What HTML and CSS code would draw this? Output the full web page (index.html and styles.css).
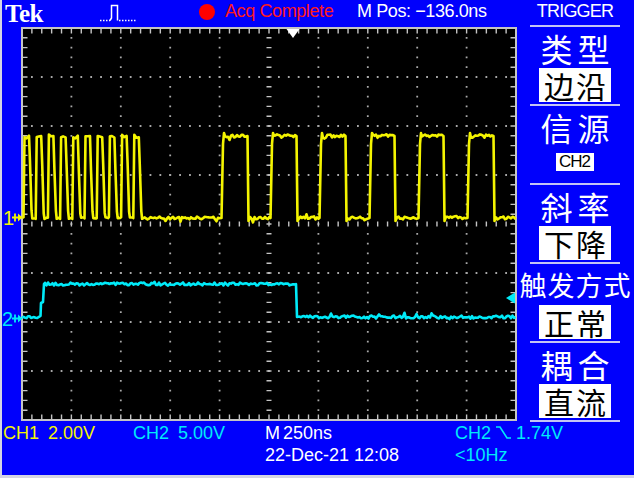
FILE: index.html
```html
<!DOCTYPE html>
<html lang="zh-CN">
<head>
    <meta charset="UTF-8">
    <title>TDS Trigger</title>
    <link rel="stylesheet" href="styles.css">
</head>
<body>
    <div class="scope">
        <div class="topbar">
            <span class="tek">Tek</span>
            <span class="trig-state">
                <svg width="36" height="22" viewBox="0 0 36 22">
                    <path class="dotted" d="M0 19.5 H10"/>
                    <path class="edge" d="M10 19.5 L11.5 17 V4.5 H17.5 V19.5"/>
                    <path class="dotted" d="M19 19.5 H36"/>
                </svg>
            </span>
            <span class="acq-dot"></span>
            <span class="acq">Acq Complete</span>
            <span class="mpos">M Pos: &minus;136.0ns</span>
        </div>
        <div class="menu-title">TRIGGER</div>

        <div class="display">
            <svg id="screen" width="518" height="397" viewBox="2 25 518 397">
                <rect class="grat-bg" x="22" y="28" width="494" height="392"/>
                <!-- 点状网格 -->
                <g class="dots-v">
                    <line x1="71.4" y1="28" x2="71.4" y2="420"/>
                    <line x1="120.8" y1="28" x2="120.8" y2="420"/>
                    <line x1="170.2" y1="28" x2="170.2" y2="420"/>
                    <line x1="219.6" y1="28" x2="219.6" y2="420"/>
                    <line x1="318.4" y1="28" x2="318.4" y2="420"/>
                    <line x1="367.8" y1="28" x2="367.8" y2="420"/>
                    <line x1="417.2" y1="28" x2="417.2" y2="420"/>
                    <line x1="466.6" y1="28" x2="466.6" y2="420"/>
                </g>
                <g class="dots-h">
                    <line x1="22" y1="77" x2="516" y2="77"/>
                    <line x1="22" y1="126" x2="516" y2="126"/>
                    <line x1="22" y1="175" x2="516" y2="175"/>
                    <line x1="22" y1="273" x2="516" y2="273"/>
                    <line x1="22" y1="322" x2="516" y2="322"/>
                    <line x1="22" y1="371" x2="516" y2="371"/>
                </g>
                <!-- 中心轴和边框刻度 -->
                <line class="ticks-v" x1="269" y1="28" x2="269" y2="420"/>
                <line class="ticks-v" x1="25" y1="28" x2="25" y2="420"/>
                <line class="ticks-v" x1="513" y1="28" x2="513" y2="420"/>
                <line class="ticks-h" x1="22" y1="224" x2="516" y2="224"/>
                <line class="ticks-h" x1="22" y1="31" x2="516" y2="31"/>
                <line class="ticks-h" x1="22" y1="417" x2="516" y2="417"/>
                <rect class="grat-border" x="22" y="28" width="494" height="392"/>

                <polyline id="ch1" class="trace ch1"/>
                <polyline id="ch2" class="trace ch2"/>

                <!-- 通道标记 -->
                <text class="mark ch1-mark" x="3" y="225">1</text>
                <path class="arrow ch1-arrow" d="M12 217.5 H19 M15 213.5 V221.5"/>
                <polygon class="ch1-fill" points="18,213.5 22.5,217.5 18,221.5"/>
                <text class="mark ch2-mark" x="2" y="326">2</text>
                <path class="arrow ch2-arrow" d="M12 318.5 H19 M15 314.5 V322.5"/>
                <polygon class="ch2-fill" points="18,314.5 22.5,318.5 18,322.5"/>

                <polygon class="ch2-fill" points="506,298 515,292.5 515,303.5"/>
                <polygon class="trig-pos" points="286.5,29 299.5,29 293,38"/>
            </svg>
        </div>

        <ul class="menu">
            <li class="item">
                <span class="label">类型</span>
                <span class="value">边沿</span>
            </li>
            <li class="item">
                <span class="label">信源</span>
                <span class="value small">CH2</span>
            </li>
            <li class="item">
                <span class="label">斜率</span>
                <span class="value">下降</span>
            </li>
            <li class="item">
                <span class="label wide">触发方式</span>
                <span class="value">正常</span>
            </li>
            <li class="item">
                <span class="label">耦合</span>
                <span class="value">直流</span>
            </li>
        </ul>

        <div class="readout">
            <span class="cell yellow"><span>CH1</span><span>2.00V</span></span>
            <span class="cell cyan"><span>CH2</span><span>5.00V</span></span>
            <span class="cell white tight"><span>M</span><span>250ns</span></span>
            <span class="cell cyan slope-cell">
                <span>CH2</span>
                <svg class="slope" width="15" height="15" viewBox="0 0 15 15">
                    <path d="M0 2 H4 L11 13 H15"/>
                </svg>
                <span>1.74V</span>
            </span>
            <span class="cell white date">22-Dec-21 12:08</span>
            <span class="cell cyan freq">&lt;10Hz</span>
        </div>
    </div>
    <script src="script.js"></script>
</body>
</html>
```

FILE: styles.css
```css
*{
    box-sizing: border-box;
}
body{
    margin: 0;
    background: #fff;
}
.scope{
    width: 634px;
    height: 478px;
    background-color: #0000fc;
    border-left: 2px solid #d4d4e4;
    border-bottom: 3px solid #d4d4e4;
    display: grid;
    grid-template-columns: 518px 114px;
    grid-template-rows: 25px 397px 53px;
    font-family: "Liberation Sans", Arial, sans-serif;
    font-size: 18px;
    color: #fff;
}

/* 顶部状态栏 */
.topbar{
    grid-column: 1;
    grid-row: 1;
    display: grid;
    grid-template-columns: 95px 99px 26px 132px 1fr;
    padding-left: 3px;
    align-items: start;
    line-height: 23px;
    white-space: nowrap;
}
.tek{
    font-family: "Liberation Serif", "Times New Roman", serif;
    font-weight: bold;
    font-size: 25px;
    line-height: 27px;
    letter-spacing: -0.5px;
}
.trig-state svg{
    display: block;
    margin-top: 1px;
}
.trig-state path{
    fill: none;
    stroke: #fff;
    stroke-width: 1.5;
}
.trig-state .dotted{
    stroke-dasharray: 1.5 1.5;
}
.acq-dot{
    width: 16px;
    height: 16px;
    margin-top: 4px;
    border-radius: 50%;
    background-color: #ff0000;
}
.acq{
    color: #ff1a1a;
    letter-spacing: -0.4px;
}
.mpos{
    letter-spacing: -0.4px;
}
.menu-title{
    grid-column: 2;
    grid-row: 1;
    text-align: center;
    line-height: 23px;
    letter-spacing: -0.8px;
    padding-right: 4px;
}

/* 波形显示区 */
.display{
    grid-column: 1;
    grid-row: 2;
}
.display svg{
    display: block;
}
.grat-bg{
    fill: #000;
}
.grat-border{
    fill: none;
    stroke: #c4c4c4;
    stroke-width: 2;
}
.dots-v line{
    stroke: #a8a8a8;
    stroke-width: 1.8;
    stroke-dasharray: 1.8 8;
    stroke-dashoffset: 0.9;
}
.dots-h line{
    stroke: #a8a8a8;
    stroke-width: 1.8;
    stroke-dasharray: 1.8 8.08;
    stroke-dashoffset: 0.9;
}
.ticks-v{
    stroke: #c4c4c4;
    stroke-width: 5;
    stroke-dasharray: 1.4 8.4;
    stroke-dashoffset: 0.7;
}
.ticks-h{
    stroke: #c4c4c4;
    stroke-width: 5;
    stroke-dasharray: 1.4 8.48;
    stroke-dashoffset: 0.7;
}
.trace{
    fill: none;
    stroke-width: 2.6;
    stroke-linejoin: round;
}
.trace.ch1{
    stroke: #f4f400;
}
.trace.ch2{
    stroke: #00eaf8;
}
.mark{
    font-family: "Liberation Sans", Arial, sans-serif;
    font-size: 20px;
}
.ch1-mark, .ch1-fill{
    fill: #f4f400;
}
.ch2-mark, .ch2-fill{
    fill: #00eaf8;
}
.arrow{
    fill: none;
    stroke-width: 1.8;
}
.ch1-arrow{
    stroke: #f4f400;
}
.ch2-arrow{
    stroke: #00eaf8;
}
.trig-pos{
    fill: #fff;
}

/* 右侧触发菜单 */
.menu{
    grid-column: 2;
    grid-row: 2;
    list-style: none;
    margin: 0;
    padding: 0;
    display: flex;
    flex-direction: column;
}
.item{
    height: 79px;
    margin: 0 14px 0 10px;
    border-top: 2px solid #c4c4f4;
    display: flex;
    flex-direction: column;
    align-items: center;
    padding-top: 5px;
}
.item:last-child{
    height: 81px;
    border-bottom: 2px solid #c4c4f4;
}
.label{
    font-family: "Noto Sans CJK SC", sans-serif;
    font-size: 32px;
    line-height: 32px;
    letter-spacing: 5px;
    padding-left: 5px;
    white-space: nowrap;
    margin-bottom: 4px;
}
.label.wide{
    font-size: 27px;
    letter-spacing: 1px;
    padding-left: 1px;
}
.value{
    background-color: #fff;
    color: #000;
    font-family: "Noto Sans CJK SC", sans-serif;
    font-size: 30px;
    line-height: 34px;
    letter-spacing: 2px;
    padding: 0 3px 0 5px;
    white-space: nowrap;
}
.value.small{
    font-family: "Liberation Sans", Arial, sans-serif;
    font-size: 17px;
    line-height: 18px;
    letter-spacing: -1px;
    padding: 0 4px 0 3px;
    margin-top: 6px;
}

/* 底部读数 */
.readout{
    grid-column: 1 / 3;
    grid-row: 3;
    display: grid;
    grid-template-columns: 130px 132px 190px 1fr;
    grid-template-rows: 22px 22px;
    padding-left: 1px;
    line-height: 22px;
    white-space: nowrap;
}
.cell{
    display: flex;
    align-items: center;
    gap: 9px;
}
.cell.tight{
    gap: 3px;
}
.slope-cell{
    gap: 5px;
}
.slope{
    display: block;
    margin-bottom: 2px;
}
.slope path{
    fill: none;
    stroke: #00eaf8;
    stroke-width: 1.6;
}
.date{
    grid-column: 3;
    grid-row: 2;
}
.freq{
    grid-column: 4;
    grid-row: 2;
}
.yellow{
    color: #f4f400;
}
.cyan{
    color: #00eaf8;
}
.white{
    color: #fff;
}
```

FILE: script.js
```js
// 用固定种子的伪随机数给波形加一点噪声
var seed = 12345;
function rnd(){
    seed = (seed * 16807) % 2147483647;
    return seed / 2147483647;
}
function jit(a){
    return (rnd() - 0.5) * 2 * a;
}
// 一段带噪声的平线，偶尔有小毛刺
function flat(pts, x0, x1, y, amp){
    for(var x = x0; x < x1; x += 1.5){
        var spike = rnd() < 0.06 ? jit(4) : 0;
        pts.push([x, y + jit(amp) + spike]);
    }
}

function ch1Points(){
    var lo = 218, hi = 136, pts = [[22, lo]];
    // 前面一串窄脉冲
    for(var k = 0; k < 10; k++){
        var x = 23.5 + 12.2 * k;
        pts.push([x, lo + jit(1)]);
        pts.push([x + 1, hi + jit(1.5)]);
        pts.push([x + 3, hi + 1 + jit(1.5)]);
        pts.push([x + 5.5, hi + 1 + jit(1.5)]);
        pts.push([x + 6.5, hi + 30 + jit(4)]);
        pts.push([x + 8, lo - 6 + jit(2)]);
        pts.push([x + 8.8, lo + jit(1)]);
        pts.push([x + 11.5, lo + jit(1)]);
    }
    // 后面的宽脉冲
    var rises = [222, 271, 320, 370, 419, 468];
    var falls = [248, 297, 346, 395, 444, 494];
    var x = 146;
    for(var i = 0; i < rises.length; i++){
        flat(pts, x, rises[i] - 1, lo, 1.5);
        pts.push([rises[i] - 0.5, lo]);
        pts.push([rises[i] + 1, hi + 8]);
        pts.push([rises[i] + 2, hi - 3]);
        flat(pts, rises[i] + 3, falls[i] - 1, hi, 1.8);
        pts.push([falls[i] - 0.5, hi]);
        pts.push([falls[i] + 0.5, lo + 3]);
        x = falls[i] + 2;
    }
    flat(pts, x, 516, lo, 1.5);
    return pts;
}

function ch2Points(){
    var lo = 317, hi = 284, pts = [];
    flat(pts, 22, 40, lo, 1.2);
    pts.push([40.5, 316], [41, 303], [43, 302], [44, hi]);
    flat(pts, 45, 296, hi, 1.5);
    pts.push([296, hi], [297, lo]);
    flat(pts, 298, 516, lo, 1.5);
    return pts;
}

function draw(id, pts){
    var s = pts.map(function(p){
        return Math.min(516, p[0]).toFixed(1) + "," + p[1].toFixed(1);
    }).join(" ");
    document.getElementById(id).setAttribute("points", s);
}

draw("ch1", ch1Points());
draw("ch2", ch2Points());
```
